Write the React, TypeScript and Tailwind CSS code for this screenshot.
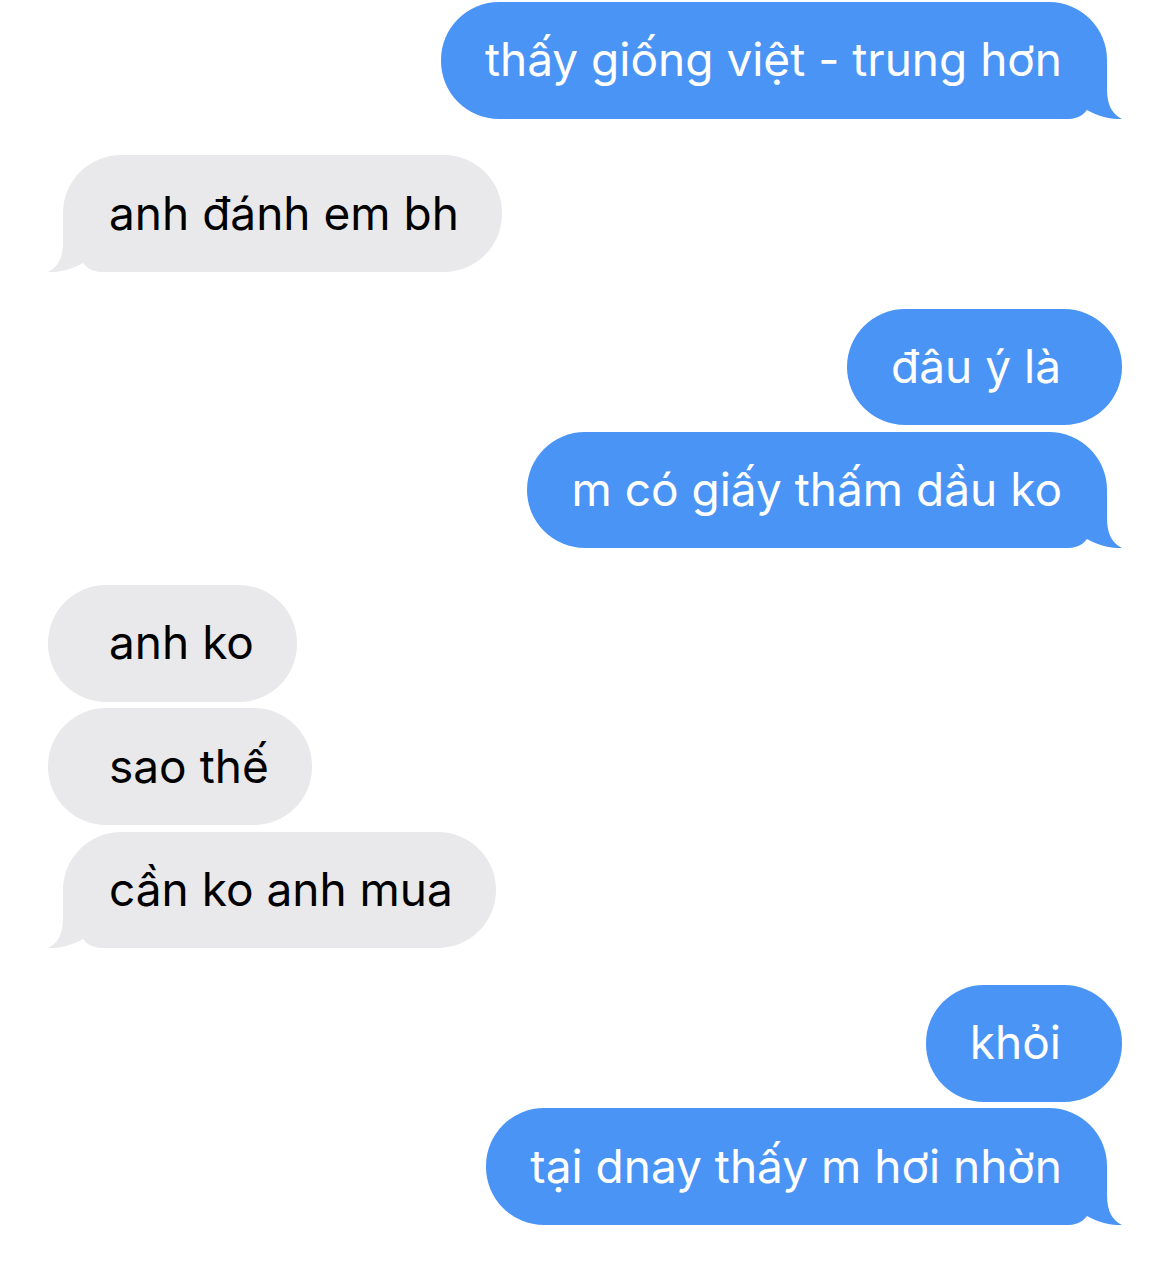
import React from 'react';

type Msg = { text: string; me: boolean; tail: boolean; gap: boolean };

const messages: Msg[] = [
  { text: 'thấy giống việt - trung hơn', me: true, tail: true, gap: false },
  { text: 'anh đánh em bh', me: false, tail: true, gap: true },
  { text: 'đâu ý là', me: true, tail: false, gap: true },
  { text: 'm có giấy thấm dầu ko', me: true, tail: true, gap: false },
  { text: 'anh ko', me: false, tail: false, gap: true },
  { text: 'sao thế', me: false, tail: false, gap: false },
  { text: 'cần ko anh mua', me: false, tail: true, gap: false },
  { text: 'khỏi', me: true, tail: false, gap: true },
  { text: 'tại dnay thấy m hơi nhờn', me: true, tail: true, gap: false },
];

const Tail: React.FC<{ me: boolean }> = ({ me }) => (
  <svg
    width="77"
    height="58"
    viewBox="0 0 77 58"
    className={me ? 'absolute bottom-0 right-[-15px]' : 'absolute bottom-0 left-[-15px] -scale-x-100'}
  >
    <path
      d="M0 0 L62 0 L62 28 C62 44 67 53 77 58 C67 58.5 54 56 42 49 C38 54 33 57.5 24 58 L0 58 Z"
      fill={me ? '#4a94f6' : '#e9e9eb'}
    />
  </svg>
);

const Bubble: React.FC<{ m: Msg; first: boolean }> = ({ m, first }) => {
  const base = 'relative h-[116.5px] flex items-center rounded-[58px] text-[46px] leading-none whitespace-nowrap';
  const color = m.me ? 'bg-[#4a94f6] text-white' : 'bg-[#e9e9eb] text-black';
  const pad = m.me
    ? m.tail
      ? 'pl-[44px] pr-[45px] mr-[15px]'
      : 'pl-[44px] pr-[61px]'
    : m.tail
      ? 'pl-[46px] pr-[43px] ml-[15px]'
      : 'pl-[61px] pr-[43px]';
  const top = first ? 'mt-0' : m.gap ? 'mt-[36.8px]' : 'mt-[6.8px]';
  return (
    <div className={`flex ${m.me ? 'justify-end' : 'justify-start'} ${top}`}>
      <div className={`${base} ${color} ${pad}`}>
        {m.tail && <Tail me={m.me} />}
        <span className="relative pb-[2px]">{m.text}</span>
      </div>
    </div>
  );
};

const App: React.FC = () => {
  return (
    <div
      className="h-[1262px] w-full overflow-hidden bg-white px-[48px] pt-[2px]"
      style={{ fontFamily: 'Inter, "Noto Sans", sans-serif' }}
    >
      {messages.map((m, i) => (
        <Bubble key={i} m={m} first={i === 0} />
      ))}
      <div className="mt-[36.8px] h-[116px] w-[145px] rounded-[58px] bg-[#e9e9eb]" />
    </div>
  );
};

export default App;
